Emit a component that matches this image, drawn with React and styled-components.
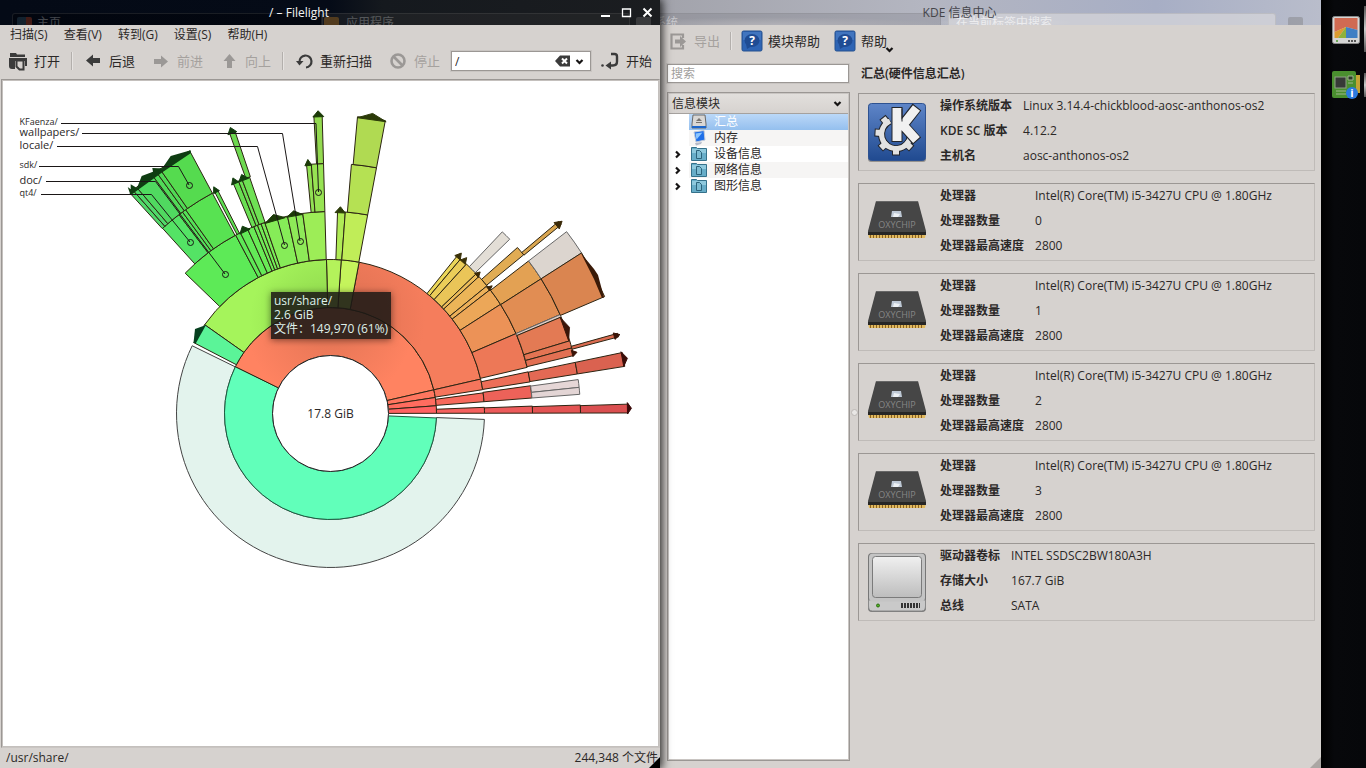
import React from "react";
import styled, { createGlobalStyle, css } from "styled-components";

const Global = createGlobalStyle`
  * { box-sizing: border-box; }
  body {
    margin: 0;
    background: #050608;
    color: #2b2827;
    font: 12px/16px "Open Sans", "Noto Sans CJK SC", sans-serif;
  }
  button, input { font: inherit; color: inherit; }
  button { border: 0; background: none; padding: 0; }
  dl, dd, ul, h1, h2 { margin: 0; padding: 0; }
`;

const Desktop = styled.div`
  display: grid;
  grid-template-columns: minmax(0, 660fr) minmax(0, 661fr) 45px;
  min-height: 100vh;
`;

const Window = styled.section`
  position: relative;
  display: flex;
  flex-direction: column;
  min-width: 0;
  background: #d6d2cf;
`;

const FrontWindow = styled(Window)`
  z-index: 2;
  box-shadow: 1px 0 9px 1px rgba(0, 0, 0, 0.85);
`;

const TitleBar = styled.header`
  position: relative;
  display: flex;
  align-items: center;
  justify-content: center;
  height: 25px;
  padding-right: 62px;
  overflow: hidden;
  color: ${(p) => (p.$dark ? "#f2f2f2" : "#45454a")};
  background: ${(p) =>
    p.$dark
      ? "linear-gradient(90deg, #040a16 0%, #050b17 50%, #15191e 58%, #1b1d20 100%)"
      : "radial-gradient(ellipse at 18% 100%, #c9c8cd 0, #c9c8cd00 22%), radial-gradient(ellipse at 52% 90%, #cfced2 0, #c9c9ce00 14%), linear-gradient(90deg, #a2a3ab, #b4b6c1 40%, #a7aec5 75%, #b9bdcb)"};
`;

const WindowTitle = styled.h1`
  position: relative;
  font-size: 12px;
  font-weight: 400;
  line-height: 24px;
`;

const WindowButtons = styled.div`
  position: absolute;
  right: 6px;
  top: 6px;
  display: flex;
  gap: 8px;
`;

const WindowButton = styled.button`
  width: 13px;
  height: 13px;
  line-height: 0;
`;

/* Content of the window underneath, showing through the translucent bars */
const Ghost = styled.span`
  position: absolute;
  top: 15px;
  left: ${(p) => p.$left};
  opacity: ${(p) => p.$opacity};
  color: #ffffff;
  white-space: nowrap;
`;

const GhostIcon = styled.span`
  position: absolute;
  top: 17px;
  left: ${(p) => p.$left};
  width: 15px;
  height: 15px;
  border-radius: 2px;
  opacity: 0.4;
  background: ${(p) => p.$fill};
`;

const GhostBar = styled.span`
  position: absolute;
  top: 13px;
  bottom: 0;
  left: ${(p) => p.$left};
  right: ${(p) => p.$right};
  background: ${(p) => p.$fill};
  border: 1px solid rgba(120, 120, 120, 0.2);
  border-bottom: 0;
  border-radius: 3px 3px 0 0;
`;

const MenuBar = styled.nav`
  display: flex;
  gap: 16px;
  padding: 2px 10px;
  height: 20px;
`;

const Tool = styled.button`
  display: flex;
  align-items: center;
  gap: 5px;
  padding: 0 8px 0 7px;
  height: 30px;
  flex: none;
  font-size: 13px;
  position: relative;
  color: #2b2827;
  &:disabled { color: #a5a19e; }
  svg { flex: none; }
`;

const ToolBar = styled.div`
  display: flex;
  align-items: center;
  height: ${(p) => (p.$compact ? "31px" : "32px")};
  ${Tool} { padding-right: ${(p) => (p.$compact ? "7px" : "8px")}; }
`;

const Separator = styled.span`
  flex: none;
  width: 1px;
  height: 18px;
  margin: 0 3px;
  background: #b3afac;
  box-shadow: 1px 0 0 #e6e3e1;
`;

const field = css`
  background: #fff;
  border: 1px solid #9b9794;
  box-shadow: 0 0 0 1px #c9c5c2;
`;

const LocationBox = styled.div`
  ${field}
  display: flex;
  flex: 1;
  align-items: center;
  min-width: 0;
  height: 20px;
  margin: 0 1px 0 3px;
  padding-right: 6px;
  gap: 5px;
  button { line-height: 0; }
`;

const LocationInput = styled.input`
  flex: 1;
  min-width: 0;
  border: 0;
  outline: 0;
  background: none;
  padding: 0 3px;
  height: 18px;
`;

const Canvas = styled.main`
  position: relative;
  flex: 1;
  display: flex;
  min-height: 480px;
  margin: 2px 0 0 1px;
  background: #fff;
  border: 1px solid #c4c0bd;
  border-color: #9b9794 #c9c5c2 #c9c5c2 #9b9794;
  outline: 1px solid #c4c0bd;
  outline-offset: -2px;
  svg { width: 100%; height: 100%; padding: 1px; }
`;

const Tooltip = styled.div`
  position: absolute;
  left: 269px;
  top: 212px;
  width: 120px;
  height: 47px;
  padding: 2px 3px;
  line-height: 14px;
  white-space: nowrap;
  color: #dff0ea;
  background: rgba(29, 25, 22, 0.88);
  box-shadow: 0 1px 7px rgba(0, 0, 0, 0.5);
`;

const StatusBar = styled.footer`
  position: relative;
  display: flex;
  justify-content: space-between;
  padding: 2px 2px 2px 6px;
  height: 20px;
`;

const Grip = styled.span`
  position: absolute;
  right: 0;
  bottom: 0;
  border-style: solid;
  border-width: 0 0 11px 11px;
  border-color: transparent transparent ${(p) => p.$tone};
`;

const InfoBody = styled.div`
  display: flex;
  flex: 1;
  padding: 7px 6px 7px 7px;
`;

const Sidebar = styled.aside`
  display: flex;
  flex-direction: column;
  flex: none;
  width: 183px;
  gap: 8px;
`;

const Splitter = styled.div`
  display: flex;
  align-items: center;
  justify-content: center;
  width: 8px;
  &::after {
    content: "";
    width: 5px;
    height: 5px;
    border-radius: 50%;
    background: #e9e7e5;
    border: 1px solid #bcb8b5;
  }
`;

const SearchInput = styled.input`
  ${field}
  width: 182px;
  height: 19px;
  padding: 0 3px;
  outline: 0;
  margin: 1px 0;
  &::placeholder { color: #a19e9c; opacity: 1; }
`;

const Tree = styled.div`
  flex: 1;
  background: #fff;
  border: 1px solid #9b9794;
  outline: 1px solid #c9c5c2;
  outline-offset: -2px;
  padding: 1px;
`;

const TreeHeader = styled.button`
  display: flex;
  align-items: center;
  justify-content: space-between;
  width: 100%;
  height: 20px;
  padding: 0 6px 0 3px;
  background: linear-gradient(#e2dfdc, #d6d2cf);
  border-bottom: 1px solid #a5a19e;
`;

const TreeList = styled.ul`
  list-style: none;
`;

const TreeItem = styled.li`
  display: grid;
  grid-template-columns: 20px 1fr;
  align-items: center;
  height: 16px;
  button { line-height: 0; text-align: left; padding-left: 4px; }
`;

const TreeLabel = styled.a`
  display: flex;
  align-items: center;
  gap: 7px;
  height: 16px;
  padding-left: 2px;
  text-decoration: none;
  color: ${(p) => (p.$selected ? "#fff" : "#2b2827")};
  background: ${(p) =>
    p.$selected
      ? "linear-gradient(#bbd8f8, #94bfee)"
      : p.$striped
      ? "#f6f5f4"
      : "none"};
`;

const Details = styled.main`
  flex: 1;
  min-width: 0;
  display: flex;
  flex-direction: column;
`;

const DetailsTitle = styled.h2`
  font-size: 12px;
  font-weight: 600;
  line-height: 20px;
  margin: 1px 0 9px;
  padding-left: 3px;
`;

const Cards = styled.div`
  display: flex;
  flex-direction: column;
  gap: 12px;
`;

const Card = styled.section`
  display: flex;
  gap: 11px;
  align-items: center;
  height: 78px;
  padding: 0 6px;
  border: 1px solid #bfbbb8;
  border-top-color: #9b9794;
  border-left-color: #9b9794;
  > svg { flex: none; }
`;

const Facts = styled.dl`
  display: grid;
  grid-template-columns: auto 1fr;
  column-gap: 11px;
  row-gap: 9px;
  align-self: flex-start;
  padding-top: 4px;
  dt { font-weight: 600; }
`;

const Dock = styled.nav`
  display: flex;
  flex-direction: column;
  align-items: center;
  gap: 27px;
  padding: 16px 0 16px 4px;
  background: linear-gradient(90deg, #000 0, #07080b 30%, #06070a 100%);
`;

const DockButton = styled.button`
  position: relative;
  width: 28px;
  height: 28px;
  line-height: 0;
  &::after {
    content: "";
    position: absolute;
    right: -6px;
    top: ${(p) => (p.$active ? "-10px" : "2px")};
    width: 2px;
    height: ${(p) => (p.$active ? "46px" : "24px")};
    background: linear-gradient(#555, #ccc, #555);
  }
`;

/* ---------- radial map ---------- */

const CX = 330.5;
const CY = 413.5;
const RADII = [0, 58, 106, 154, 202, 250, 298];

const point = (r, deg) => {
  const a = (deg * Math.PI) / 180;
  return [CX + r * Math.cos(a), CY - r * Math.sin(a)];
};
const xy = (r, deg) => point(r, deg).map((n) => n.toFixed(2)).join(" ");

const slicePath = (ring, from, to) => {
  const inner = RADII[ring];
  const outer = RADII[ring + 1];
  const large = to - from > 180 ? 1 : 0;
  return `M${xy(inner, from)}L${xy(outer, from)}A${outer} ${outer} 0 ${large} 0 ${xy(outer, to)}L${xy(inner, to)}A${inner} ${inner} 0 ${large} 1 ${xy(inner, from)}Z`;
};

const capPath = (r, from, to, h) =>
  `M${xy(r - 1, from)}L${xy(r + h, (from + to) / 2)}L${xy(r - 1, to)}Z`;

const GRAY = "#666666";

// [ring, start angle, end angle, fill, outline]
const SLICES = [
  [2, 153.9, 357.8, "#e3f3ed", "#444444"],
  [1, 153.8, 357.6, "#61ffba", "#1d5b41"],
  [1, 12.9, 153.8, "url(#usr)"],
  [1, 8.7, 12.9, "#ff765f"],
  [1, 4.2, 8.7, "#ff6c5f"],
  [1, 0.1, 4.2, "#ff6262"],
  [2, 12.9, 79.3, "url(#lib)"],
  [2, 79.3, 86, "#c5f45c"],
  [2, 86, 91.5, "#b4f25b"],
  [2, 91.5, 144.8, "url(#share)"],
  [2, 144.8, 152.6, "#5bf498"],
  [2, 8.9, 12.9, "#f6755c"],
  [2, 4.4, 7.7, "#f7695c"],
  [2, 0.1, 2.3, "#f6605e"],
  [3, 118, 136, "#5dea57"],
  [3, 116.5, 118, "#5de957"],
  [3, 114.2, 116.5, "#63ea57"],
  [3, 112.3, 114.2, "#69ea57"],
  [3, 111.2, 112.3, "#6eea57"],
  [3, 110.1, 111.2, "#73ea57"],
  [3, 109, 110.1, "#79eb57"],
  [3, 102.3, 109, "#86ec58"],
  [3, 97.9, 102.3, "#8eea58"],
  [3, 91.6, 97.9, "#9ded57"],
  [3, 85.8, 88, "#b0eb56"],
  [3, 79.4, 85.8, "#c0ed58"],
  [3, 49.9, 51.2, "#ecd75a"],
  [3, 47.7, 49.9, "#ebcd59"],
  [3, 43.8, 47.7, "#eac558"],
  [3, 42.7, 43.8, "#edbc59"],
  [3, 39.2, 42.7, "#ecb558"],
  [3, 37.8, 39.2, "#edb059"],
  [3, 32.7, 37.8, "#eca758"],
  [3, 23.3, 32.7, "#ec9257"],
  [3, 13.2, 23.3, "#ed7857"],
  [3, 9, 11.9, "#ed6e58"],
  [3, 4.4, 7.9, "#ed6259"],
  [3, 0.1, 2.1, "#ed5b5b"],
  [4, 127.3, 132.2, "#54e365"],
  [4, 126.3, 127.3, "#54e05c"],
  [4, 125.4, 126.3, "#54e058"],
  [4, 118.2, 125.4, "#58e252"],
  [4, 116.8, 117.6, "#5de052"],
  [4, 111.6, 112.9, "#69df53"],
  [4, 110.7, 111.6, "#6bdf53"],
  [4, 108.9, 110.7, "#6ee154"],
  [4, 94.4, 95.5, "#91e053"],
  [4, 91.6, 94.4, "#97e353"],
  [4, 79.4, 85.2, "#b5e153"],
  [4, 44.2, 46.6, "#e3ded6", GRAY],
  [4, 39.4, 41.6, "#e1ac53"],
  [4, 32.6, 37.6, "#e3a153"],
  [4, 23.3, 32.6, "#e18d53"],
  [4, 22.7, 23.3, "#dccbc4", GRAY],
  [4, 16.9, 22.7, "#e37a54"],
  [4, 15.2, 16.9, "#e37453"],
  [4, 13.4, 15.2, "#e27053"],
  [4, 9.1, 11.8, "#e36954"],
  [4, 6, 7.8, "#e5d6d6", GRAY],
  [4, 4.4, 6, "#e3d5d5", GRAY],
  [4, 0.1, 1.95, "#e35353"],
  [5, 131.5, 132.3, "#50d96a"],
  [5, 130.6, 131.5, "#50d96a"],
  [5, 126.8, 130.6, "#50d960"],
  [5, 125.8, 126.8, "#50d958"],
  [5, 124.9, 125.8, "#50d955"],
  [5, 118.2, 124.9, "#55db4f"],
  [5, 108.7, 109.8, "#6dd950"],
  [5, 91.6, 93.2, "#93da50"],
  [5, 79.4, 84.8, "#b0da52"],
  [5, 39.3, 40.1, "#d9a54f"],
  [5, 32.6, 37.6, "#dcd5cf", GRAY],
  [5, 23.1, 32.6, "#da8550"],
  [5, 14.9, 15.6, "#da6b50"],
  [5, 9.1, 11.8, "#da6250"],
  [5, 0.1, 1.8, "#da4f50"],
];

// [radius, start angle, end angle, height, fill]
const CAPS = [
  [202, 103, 109, 5, "#1c3a08"],
  [202, 98, 102.6, 4, "#1c3a08"],
  [202, 113.6, 116.8, 5, "#123d0e"],
  [202, 85.8, 88.7, 5, "#2b3a08"],
  [202, 49.8, 51.8, 5, "#3a3108"],
  [202, 47.9, 49.8, 5, "#3a3108"],
  [202, 42.6, 44.2, 4, "#3a2908"],
  [202, 37.6, 39, 4, "#3a2508"],
  [250, 111.6, 113.4, 5, "#123d0e"],
  [250, 109.2, 111.6, 5, "#123d0e"],
  [250, 116.5, 118, 5, "#123d0e"],
  [250, 94.3, 95.9, 5, "#1c3a08"],
  [250, 13.2, 14.7, 4, "#3a1508"],
  [250, 17, 22.7, 4, "#3a1508"],
  [298, 108.4, 110.2, 5, "#123d0e"],
  [298, 91.3, 93.4, 5, "#1c3a08"],
  [298, 79.2, 84.8, 5, "#2b3a08"],
  [295, 38.9, 40.5, 6, "#3a2908"],
  [295, 14.6, 15.9, 5, "#3a1508"],
  [298, 9.1, 12, 4, "#3a0d08"],
  [298, -0.1, 2.1, 3, "#3a0808"],
];

const CAP_SHAPES = [
  ["195 329 206 325 196 343 193.5 343", "#06401f"],
  [
    "130.5 195 127.7 187 130.7 189.3 130.7 184.3 137 188 141.7 176 147 174 153 171.7 152.3 168 158 168.3 162.3 168.3 170.7 156 190.7 150.3 191 153 161.7 172.7 132.3 194",
    "#0f3d12",
  ],
  ["581 253.3 594 269 598 275 604 297.5 602 298 594 279", "#3a1a08"],
];

const LEADERS = [
  ["61 123.5 316 123.5 318.5 192", 318.5, 192.5],
  ["82 133.5 282.5 133.5 300 241", 300.5, 241.5],
  ["57 146.5 257.5 146.5 284.5 245", 284.5, 245.5],
  ["39 166.5 178.5 166.5 189 185", 189.5, 185.5],
  ["46 181.5 155.5 181.5 225 274", 225.5, 274.5],
  ["41 194.5 151.5 194.5 190 242", 190.5, 242.5],
];

const FOLDER_LABELS = [
  ["KFaenza/", 125, 9],
  ["wallpapers/", 136, 11],
  ["locale/", 149, 11],
  ["sdk/", 168, 9],
  ["doc/", 184, 11],
  ["qt4/", 196, 9],
];

function RadialMap() {
  return (
    <svg viewBox="3 81 655 665" role="img" aria-label="磁盘使用情况">
      <defs>
        <radialGradient id="usr" gradientUnits="userSpaceOnUse" cx="330" cy="320" r="85">
          <stop offset="0.3" stopColor="#ea7858" />
          <stop offset="1" stopColor="#ff8361" />
        </radialGradient>
        <radialGradient id="lib" gradientUnits="userSpaceOnUse" cx="340" cy="320" r="85">
          <stop offset="0.3" stopColor="#e27354" />
          <stop offset="1" stopColor="#f57d5c" />
        </radialGradient>
        <radialGradient id="share" gradientUnits="userSpaceOnUse" cx="330" cy="320" r="80">
          <stop offset="0.3" stopColor="#94dd50" />
          <stop offset="1" stopColor="#a5f45b" />
        </radialGradient>
      </defs>
      {SLICES.map(([ring, from, to, fill, outline]) => (
        <path
          key={`${ring}-${from}`}
          d={slicePath(ring, from, to)}
          fill={fill}
          stroke={outline || "#2c2412"}
          strokeWidth="1"
        />
      ))}
      {CAPS.map(([r, from, to, h, fill]) => (
        <path key={`${r}-${from}`} d={capPath(r, from, to, h)} fill={fill} stroke={fill} />
      ))}
      {CAP_SHAPES.map(([points, fill]) => (
        <polygon key={points} points={points} fill={fill} />
      ))}
      <circle cx={CX} cy={CY} r="58" fill="#fff" stroke="#222" />
      <text x={CX} y="418" fontSize="12" textAnchor="middle" fill="#2b2827">17.8 GiB</text>
      {LEADERS.map(([points, x, y]) => (
        <g key={points} fill="none" stroke="#1a1616">
          <polyline points={points} />
          <circle cx={x} cy={y} r="3" />
        </g>
      ))}
      {FOLDER_LABELS.map(([name, y, size]) => (
        <text key={name} x="19.5" y={y} fontSize={size} fill="#2b2827">{name}</text>
      ))}
    </svg>
  );
}

/* ---------- icons ---------- */

const Icon = ({ children, size = 22 }) => (
  <svg width={size} height={size} viewBox={`0 0 ${size} ${size}`} aria-hidden="true">
    {children}
  </svg>
);

const DARK = "#3b3b3b";
const DIM = "#9b9896";

const OpenIcon = () => (
  <Icon>
    <path d="M3 3h6l1 1.500h8v2.500H3zM2 8h18v8h-2v-5H8v8H5q-3 0-3-3z" fill={DARK} />
    <path d="M9.500 10.500h7v9h-4l-3-3z" fill="#d6d2cf" stroke={DARK} strokeWidth="2" />
  </Icon>
);
const ArrowIcon = ({ turn = 0, color = DARK }) => (
  <Icon>
    <path d="M4 10.500l7-6v3.500h7v5h-7v3.500z" fill={color} transform={`rotate(${turn} 11 11)`} />
  </Icon>
);
const ReloadIcon = () => (
  <Icon>
    <path d="M6.500 12A6 6 0 1 1 13 17.500" fill="none" stroke={DARK} strokeWidth="2.200" />
    <path d="M3 11h7.500L6.500 15.500z" fill={DARK} />
  </Icon>
);
const StopIcon = () => (
  <Icon>
    <circle cx="11" cy="11" r="6.500" fill="none" stroke={DIM} strokeWidth="2.600" />
    <path d="M6.500 6.500l9 9" stroke={DIM} strokeWidth="2.600" />
  </Icon>
);
const GoIcon = () => (
  <Icon>
    <path d="M12 4h3.500q2.500 0 2.500 2.500v5q0 4-4 4h-3" fill="none" stroke={DARK} strokeWidth="2.400" />
    <path d="M6.500 15.500l5.500-4v8z" fill={DARK} />
    <circle cx="3.500" cy="15.500" r="1.300" fill={DARK} />
  </Icon>
);
const ExportIcon = () => (
  <Icon>
    <path d="M16 8V4.500H4.500v14H16V15" fill="none" stroke={DIM} strokeWidth="2.200" />
    <path d="M8 9.500h5V6l6 5.500-6 5.500v-3.500H8z" fill={DIM} />
  </Icon>
);
const HelpIcon = () => (
  <Icon>
    <rect x="1" y="1" width="20" height="20" rx="1.500" fill="#2e64b4" stroke="#24518f" />
    <path d="M2 2h18v8H2z" fill="#5485c9" opacity=".5" />
    <ellipse cx="11" cy="10.500" rx="7.500" ry="6.500" fill="#1f4c94" />
    <path d="M5 14l1 5 5-3z" fill="#1f4c94" />
    <text x="11" y="15" fontSize="12" fontWeight="700" textAnchor="middle" fill="#fff">?</text>
  </Icon>
);
const Chevron = ({ right }) => (
  <Icon size={9}>
    <path
      d="M1.500 3l3 3 3-3"
      fill="none"
      stroke="#161414"
      strokeWidth="2.200"
      transform={right ? "rotate(-90 4.500 4.500)" : undefined}
    />
  </Icon>
);
const ToolChevron = styled.span`
  position: absolute;
  right: 0;
  bottom: 2px;
  line-height: 0;
`;

const DriveSmall = () => (
  <Icon size={16}>
    <path d="M2 1h12l1 9v4H1v-4z" fill="#d9d7d5" stroke="#6a6a6a" />
    <path d="M8 4l3 3H5zM5 8h6v1H5z" fill="#77736f" />
    <path d="M1 12h14v2H1z" fill="#1c66cc" />
  </Icon>
);
const MonitorSmall = () => (
  <Icon size={16}>
    <path d="M3 2l10-1.500 1 9.500-9 2z" fill="#1f6fe8" stroke="#c3cbd8" />
    <path d="M4.500 3.500l7-1-6 7z" fill="#8cc6ff" />
    <path d="M4 13l7-1-1 2-5 1.500z" fill="#b5bac8" />
  </Icon>
);
const FolderSmall = () => (
  <Icon size={16}>
    <path d="M.500 1.500h5l1 1h9v12h-15z" fill="#67adc8" stroke="#35718a" />
    <path d="M1 3h14v4H1z" fill="#8fc9dd" />
    <path d="M5.500 4.500h3l2 2v6h-5z" fill="#7dbcd2" stroke="#2c637b" />
  </Icon>
);

const GEAR_TEETH = [-47, 0, 47, 94, 141];

const KdeIcon = () => (
  <Icon size={64}>
    <defs>
      <linearGradient id="kdeBlue" x2="0" y2="1">
        <stop stopColor="#5e85c8" />
        <stop offset="1" stopColor="#204a90" />
      </linearGradient>
    </defs>
    <rect x="3" y="4" width="58" height="58" rx="3" fill="#55534f" opacity=".5" />
    <rect x="3.500" y="3.500" width="57" height="57" rx="3" fill="url(#kdeBlue)" stroke="#2e5291" />
    {[["#22252b", 2], ["#e2e2e2", 0]].map(([color, grow]) => (
      <g key={color} fill="none" stroke={color}>
        <path d="M25 21A14.500 14.500 0 1 0 45.500 35" strokeWidth={5 + grow} />
        <g strokeWidth={6 + grow}>
          {GEAR_TEETH.map((a) => (
            <path key={a} d={`M31 46V${54.5 + grow / 2}`} transform={`rotate(${a} 31 34)`} />
          ))}
        </g>
      </g>
    ))}
    <g fill="none">
      <path d="M32 7v35M52 7L38 25l14 16" stroke="#22252b" strokeWidth="11" />
      <path d="M32 8v33M51.500 8L38 25l13.500 15" stroke="#f1f1f1" strokeWidth="9" />
      <path d="M37 8.500v13" stroke="#22252b" />
    </g>
  </Icon>
);

const ChipIcon = () => (
  <Icon size={64}>
    <path d="M3 43h58l-1 5H4z" fill="#e0b95f" />
    <path d="M5 46h54" stroke="#8b611f" strokeWidth="4" strokeDasharray="1 2" />
    <path d="M11 11h42l8 30v4H3v-4z" fill="#464646" />
    <path d="M3 42h58v3H3z" fill="#262626" />
    <path d="M11 11.500h42" stroke="#666" />
    <path d="M27 21h9l1 6H26z" fill="#bfc9d6" />
    <path d="M29 23l6 1-2 3h-5z" fill="#eef2f5" />
    <text x="32" y="38" fontSize="9" textAnchor="middle" fill="#858585">OXYCHIP</text>
  </Icon>
);

const DiskIcon = () => (
  <Icon size={64}>
    <defs>
      <linearGradient id="disk" x2="0" y2="1">
        <stop stopColor="#f0f0f0" />
        <stop offset="1" stopColor="#bdbdbd" />
      </linearGradient>
    </defs>
    <rect x="3" y="3" width="58" height="59" rx="4" fill="#777" />
    <path d="M3.500 50h57v6q0 5-4 5h-49q-4 0-4-5z" fill="#c9c9c9" stroke="#8a8a8a" />
    <rect x="4" y="3.500" width="56" height="48" rx="4" fill="#c4c4c4" />
    <rect x="7.500" y="6.500" width="49" height="41" rx="3" fill="url(#disk)" stroke="#7b7b7b" />
    <circle cx="13" cy="55.500" r="1.500" fill="#52b624" stroke="#2c6b12" />
    <path d="M36 55.500h19" stroke="#333" strokeWidth="5" strokeDasharray="2 1" />
  </Icon>
);

const FilelightDock = () => (
  <Icon size={28}>
    <rect x=".500" y=".500" width="27" height="27" rx="2" fill="#d5d5d5" stroke="#8a8a8a" />
    <path d="M2.500 2h23v12L14 11 2.500 16z" fill="#d06a52" />
    <path d="M2.500 16L14 11 6 22H2.500z" fill="#dd9b30" />
    <path d="M14 11L6 22h8z" fill="#8fb13a" />
    <path d="M14 11l11.500 3v8H14z" fill="#3f7fc4" />
    <circle cx="5" cy="25" r="1" fill="#4b9a2e" />
    <path d="M16 25h9" stroke="#555" strokeWidth="2" strokeDasharray="2 1" />
  </Icon>
);
const InfoDock = () => (
  <Icon size={28}>
    <path d="M23 4h5v18h-5z" fill="#c4a235" />
    <rect x="0" y="0" width="24" height="27" rx="2" fill="#4a8f2f" />
    <rect x="3" y="6" width="11" height="11" fill="#373a37" stroke="#8f9f88" />
    <path d="M16 5h5v4h-5zM16 12h5M4 20h10M4 23h10" fill="#2c3a28" stroke="#9fb58f" />
    <circle cx="20" cy="22" r="6" fill="#2b7be0" />
    <text x="20" y="26" fontSize="11" fontWeight="700" textAnchor="middle" fill="#fff">i</text>
  </Icon>
);

/* ---------- data ---------- */

const MENUS = ["扫描(S)", "查看(V)", "转到(G)", "设置(S)", "帮助(H)"];

const MODULES = [
  { name: "汇总", icon: DriveSmall, selected: true },
  { name: "内存", icon: MonitorSmall },
  { name: "设备信息", icon: FolderSmall, group: true },
  { name: "网络信息", icon: FolderSmall, group: true },
  { name: "图形信息", icon: FolderSmall, group: true },
];

const cpu = (n) => ({
  icon: ChipIcon,
  facts: [
    ["处理器", "Intel(R) Core(TM) i5-3427U CPU @ 1.80GHz"],
    ["处理器数量", String(n)],
    ["处理器最高速度", "2800"],
  ],
});

const SUMMARY = [
  {
    icon: KdeIcon,
    facts: [
      ["操作系统版本", "Linux 3.14.4-chickblood-aosc-anthonos-os2"],
      ["KDE SC 版本", "4.12.2"],
      ["主机名", "aosc-anthonos-os2"],
    ],
  },
  cpu(0),
  cpu(1),
  cpu(2),
  cpu(3),
  {
    icon: DiskIcon,
    facts: [
      ["驱动器卷标", "INTEL SSDSC2BW180A3H"],
      ["存储大小", "167.7 GiB"],
      ["总线", "SATA"],
    ],
  },
];

function Filelight() {
  return (
    <FrontWindow>
      <TitleBar $dark>
        <GhostBar $left="12px" $right="338px" $fill="rgba(0,0,0,.3)" />
        <GhostBar $left="322px" $right="30px" $fill="rgba(50,50,50,.35)" />
        <GhostIcon $left="17px" $fill="linear-gradient(90deg, #2c4a5c 60%, #a03a20 60%)" />
        <GhostIcon $left="324px" $fill="#b0701c" />
        <GhostIcon $left="636px" $fill="#666" />
        <Ghost $left="37px" $opacity={0.25}>主页</Ghost>
        <Ghost $left="346px" $opacity={0.25}>应用程序</Ghost>
        <WindowTitle>/ – Filelight</WindowTitle>
        <WindowButtons>
          <WindowButton aria-label="最小化">
            <Icon size={13}><path d="M2 10h9" stroke="#fff" strokeWidth="2" /></Icon>
          </WindowButton>
          <WindowButton aria-label="最大化">
            <Icon size={13}><path d="M2.500 3h8v7.500h-8zM2 3h9" fill="none" stroke="#fff" strokeWidth="1.300" /></Icon>
          </WindowButton>
          <WindowButton aria-label="关闭">
            <Icon size={13}><path d="M2.500 2.500l8 8M10.500 2.500l-8 8" stroke="#fff" strokeWidth="2" /></Icon>
          </WindowButton>
        </WindowButtons>
      </TitleBar>
      <MenuBar>
        {MENUS.map((m) => <button key={m}>{m}</button>)}
      </MenuBar>
      <ToolBar>
        <Tool><OpenIcon />打开</Tool>
        <Separator />
        <Tool><ArrowIcon />后退</Tool>
        <Tool disabled><ArrowIcon turn={180} color={DIM} />前进</Tool>
        <Tool disabled><ArrowIcon turn={90} color={DIM} />向上</Tool>
        <Separator />
        <Tool><ReloadIcon />重新扫描</Tool>
        <Tool disabled><StopIcon />停止</Tool>
        <LocationBox>
          <LocationInput aria-label="位置" defaultValue="/" />
          <button aria-label="清除">
            <svg width="15" height="12" viewBox="0 0 15 12">
              <path d="M0 6l5-5.500h10v11H5z" fill={DARK} />
              <path d="M7 3.500l5 5M12 3.500l-5 5" stroke="#fff" strokeWidth="2" />
            </svg>
          </button>
          <button aria-label="历史"><Chevron /></button>
        </LocationBox>
        <Tool><GoIcon />开始</Tool>
      </ToolBar>
      <Canvas>
        <RadialMap />
        <Tooltip role="tooltip">
          usr/share/<br />2.6 GiB<br />文件：149,970 (61%)
        </Tooltip>
      </Canvas>
      <StatusBar>
        <span>/usr/share/</span>
        <span>244,348 个文件</span>
        <Grip $tone="#000" />
      </StatusBar>
    </FrontWindow>
  );
}

function InfoCenter() {
  return (
    <Window>
      <TitleBar>
        <GhostBar $left="-4px" $right="380px" $fill="rgba(110,112,120,.25)" />
        <GhostBar $left="288px" $right="45px" $fill="rgba(214,214,218,.75)" />
        <GhostIcon $left="628px" $fill="#777" />
        <Ghost $left="-6px" $opacity={0.45}>系统</Ghost>
        <Ghost $left="296px" $opacity={0.6}>在当前标签中搜索</Ghost>
        <WindowTitle>KDE 信息中心</WindowTitle>
      </TitleBar>
      <ToolBar $compact>
        <Tool disabled><ExportIcon />导出</Tool>
        <Separator />
        <Tool><HelpIcon />模块帮助</Tool>
        <Tool>
          <HelpIcon />帮助
          <ToolChevron><Chevron /></ToolChevron>
        </Tool>
      </ToolBar>
      <InfoBody>
        <Sidebar>
          <SearchInput type="search" aria-label="搜索" placeholder="搜索" />
          <Tree>
            <TreeHeader>信息模块<Chevron /></TreeHeader>
            <TreeList>
              {MODULES.map(({ name, icon: ModuleIcon, selected, group }, i) => (
                <TreeItem key={name}>
                  {group ? <button aria-label="展开"><Chevron right /></button> : <span />}
                  <TreeLabel href="#" $selected={selected} $striped={i % 2 === 1}>
                    <ModuleIcon />{name}
                  </TreeLabel>
                </TreeItem>
              ))}
            </TreeList>
          </Tree>
        </Sidebar>
        <Splitter />
        <Details>
          <DetailsTitle>汇总(硬件信息汇总)</DetailsTitle>
          <Cards>
            {SUMMARY.map(({ icon: CardIcon, facts }, i) => (
              <Card key={i}>
                <CardIcon />
                <Facts>
                  {facts.map(([label, value]) => (
                    <React.Fragment key={label}>
                      <dt>{label}</dt>
                      <dd>{value}</dd>
                    </React.Fragment>
                  ))}
                </Facts>
              </Card>
            ))}
          </Cards>
        </Details>
      </InfoBody>
      <Grip $tone="#aaa6a3" />
    </Window>
  );
}

export default function App() {
  return (
    <>
      <Global />
      <Desktop>
        <Filelight />
        <InfoCenter />
        <Dock>
          <DockButton $active aria-label="Filelight"><FilelightDock /></DockButton>
          <DockButton aria-label="KDE 信息中心"><InfoDock /></DockButton>
        </Dock>
      </Desktop>
    </>
  );
}
